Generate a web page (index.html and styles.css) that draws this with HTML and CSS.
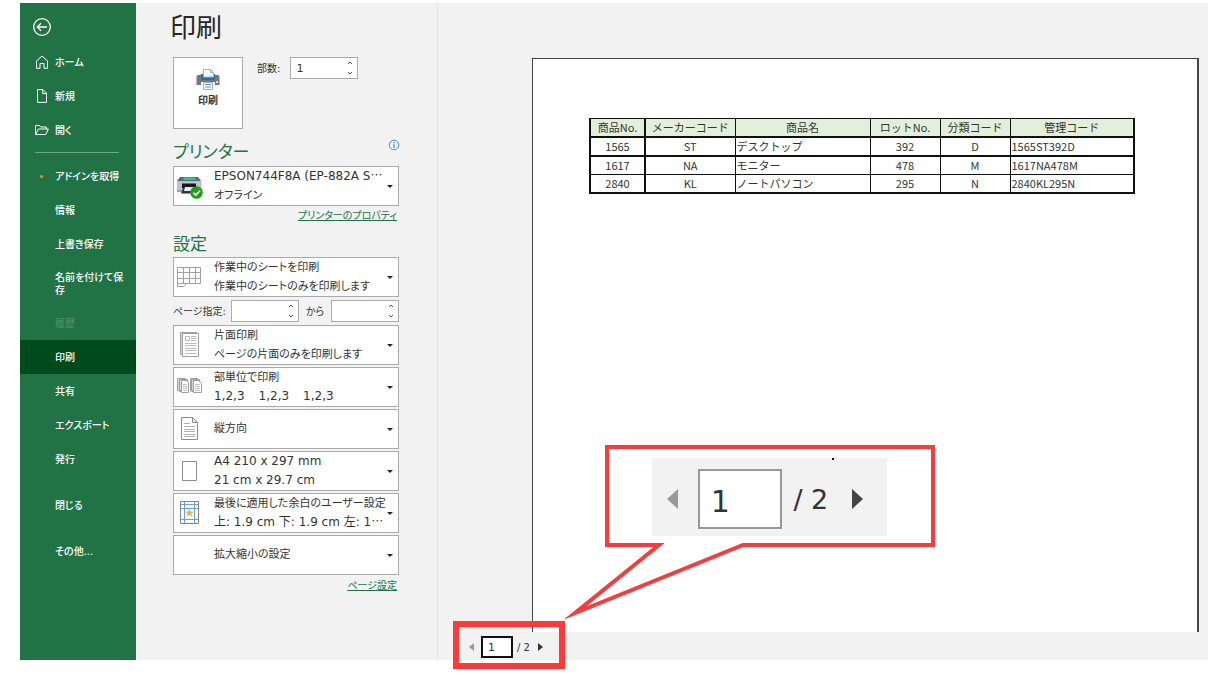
FILE: index.html
```html
<!DOCTYPE html>
<html lang="ja">
<head>
<meta charset="utf-8">
<title>印刷</title>
<meta name="viewport" content="width=device-width, initial-scale=1">
<link rel="stylesheet" href="styles.css">
</head>
<body>
<div class="app">
  <nav class="sidebar" aria-label="ファイル">
    <button class="back" aria-label="戻る">
      <svg width="20" height="20" viewBox="0 0 20 20" fill="none" stroke="currentColor" stroke-width="1.3"><circle cx="10" cy="10" r="8.3"/><path d="M15 10H5.5M9 6.2L5.2 10L9 13.8"/></svg>
    </button>
    <a class="nav-item" href="#home"><svg class="nav-icon" width="14" height="14" viewBox="0 0 14 14" fill="none" stroke="currentColor"><path d="M1 6.4L7 1L13 6.4M1.5 6V13.3H5V8.5H9V13.3H12.5V6"/></svg>ホーム</a>
    <a class="nav-item" href="#new"><svg class="nav-icon" width="14" height="14" viewBox="0 0 14 14" fill="none" stroke="currentColor"><path d="M2.5 .6H8L11.5 4.2V13.4H2.5ZM7.7 .8V4.6H11.3"/></svg>新規</a>
    <a class="nav-item" href="#open"><svg class="nav-icon" width="14" height="14" viewBox="0 0 14 14" fill="none" stroke="currentColor"><path d="M.5 11.3V2.5H4.5L5.7 4H11.3V5.8M.6 11.5L3.4 6H13.4L10.7 11.5Z"/></svg>開く</a>
    <hr class="nav-rule">
    <a class="nav-item" href="#addins"><span class="dot"></span>アドインを取得</a>
    <a class="nav-item" href="#info">情報</a>
    <a class="nav-item" href="#save">上書き保存</a>
    <a class="nav-item tall" href="#saveas">名前を付けて保存</a>
    <a class="nav-item disabled" aria-disabled="true">履歴</a>
    <a class="nav-item current" href="#print" aria-current="page">印刷</a>
    <a class="nav-item" href="#share">共有</a>
    <a class="nav-item" href="#export">エクスポート</a>
    <a class="nav-item" href="#publish">発行</a>
    <a class="nav-item spaced" href="#close">閉じる</a>
    <a class="nav-item spaced" href="#more">その他...</a>
  </nav>

  <main class="content">
    <section class="settings">
      <h1>印刷</h1>
      <div class="print-row">
        <button class="print-button">
          <svg width="24" height="22" viewBox="0 0 24 22"><path d="M2 6H22Q23.500 6 23.500 8V16H.5V8Q.5 6 2 6Z" fill="#767676"/><path d="M5 5H19V11H5Z" fill="#2e6ca8"/><path d="M7.500.5H14.500L17.500 3.500V8H7.500Z" fill="#fff" stroke="#9db3c9"/><path d="M14.500.5V3.500H17.500" fill="none" stroke="#9db3c9"/><path d="M5 13H19V16H5Z" fill="#f2f2f2"/><path d="M7.500 13.500H16.500V20.500H7.500Z" fill="#fff" stroke="#9db3c9"/><path d="M9 15.500H15M9 18H15" stroke="#5b92c8"/><circle cx="21" cy="13" r="1" fill="#fff"/></svg>
          <span>印刷</span>
        </button>
        <label for="copies">部数:</label>
        <span class="spin"><input id="copies" type="text" inputmode="numeric" value="1"><svg width="6" height="14" viewBox="0 0 6 14" fill="none" stroke="#555"><path d="M1 3L3 1L5 3M1 11L3 13L5 11"/></svg></span>
      </div>

      <div class="heading-row">
        <h2>プリンター</h2>
        <svg class="info" width="12" height="12" viewBox="0 0 12 12" fill="none" stroke="#4a96cf"><circle cx="6" cy="6" r="4.8"/><path d="M6 5.2V9M6 3V4.2" stroke-width="1.4"/></svg>
      </div>
      <button class="picker" aria-haspopup="listbox">
        <svg class="pick-icon" width="28" height="28" viewBox="0 0 28 28"><path d="M4 5H22L25 9H1Z" fill="#5e6670"/><path d="M8 5.500H19L20 8H7Z" fill="#2fc68a"/><path d="M1 9H25.500V18H1Z" fill="#b9c3cf"/><path d="M1 18H25V20H1Z" fill="#9aa4b0"/><path d="M6 11.500H20V16H6Z" fill="#15181c"/><path d="M7 16H20L21 21.500H5Z" fill="#30353b"/><path d="M9 15H18L19 19H8Z" fill="#e9edf2"/><circle cx="20.500" cy="20.500" r="6.300" fill="#219c18"/><path d="M17.300 20.800L19.700 23L24 18.600" fill="none" stroke="#fff" stroke-width="1.700"/></svg>
        <span class="pick-text"><span class="latin">EPSON744F8A (EP-882A S<span class="dots">…</span></span><span>オフライン</span></span>
        <span class="arrow"></span>
      </button>
      <a class="sub-link" href="#printer-properties">プリンターのプロパティ</a>

      <h2>設定</h2>
      <div class="pickers">
        <button class="picker" aria-haspopup="listbox">
          <svg class="pick-icon" width="28" height="28" viewBox="0 0 28 28" fill="none" stroke="#a0a0a0"><path d="M1.500 4.500H24.500V20.500H10.500L8 23.500H1.500Z"/><path d="M7.500 4.500V20.500M13.500 4.500V20.500M19.500 4.500V20.500M1.500 9.500H24.500M1.500 15.500H24.500M1.500 20.500H10.500"/></svg>
          <span class="pick-text"><span>作業中のシートを印刷</span><span>作業中のシートのみを印刷します</span></span>
          <span class="arrow"></span>
        </button>
        <div class="range">
          <label for="from">ページ指定:</label>
          <span class="spin"><input id="from" type="text" inputmode="numeric"><svg width="6" height="14" viewBox="0 0 6 14" fill="none" stroke="#555"><path d="M1 3L3 1L5 3M1 11L3 13L5 11"/></svg></span>
          <label for="to">から</label>
          <span class="spin"><input id="to" type="text" inputmode="numeric"><svg width="6" height="14" viewBox="0 0 6 14" fill="none" stroke="#555"><path d="M1 3L3 1L5 3M1 11L3 13L5 11"/></svg></span>
        </div>
        <button class="picker" aria-haspopup="listbox">
          <svg class="pick-icon" width="28" height="28" viewBox="0 0 28 28" fill="#fff" stroke="#a0a0a0"><path d="M4.500 1.500H20.500V23.500H4.500Z" fill="#d8d8d8"/><path d="M6.500 2.500H22.500V25.500H6.500Z"/><path d="M9.500 5.500H13.500V9.500H9.500ZM15 5.500H20.500M15 7.500H20.500M15 9.500H20.500M9 12.500H20.500M9 14.500H20.500M9 17.500H20.500M9 19.500H20.500M9 22.500H20.500" stroke="#bbb"/></svg>
          <span class="pick-text"><span>片面印刷</span><span>ページの片面のみを印刷します</span></span>
          <span class="arrow"></span>
        </button>
        <button class="picker" aria-haspopup="listbox">
          <svg class="pick-icon" width="28" height="28" viewBox="0 0 28 28" fill="#fff" stroke="#a0a0a0"><path d="M1.500 5.500H9.500V17.500H1.500ZM3.500 6.500H11.500V18.500H3.500ZM14.500 5.500H21.500V17.500H14.500ZM15.500 6.500H23.500V18.500H15.500Z" fill="#d8d8d8"/><path d="M5.500 7.500H10.500L12.500 9.500V19.500H5.500ZM17.500 7.500H22.500L25.500 10.500V19.500H17.500Z"/><path d="M7 11.500H11M7 13.500H11M7 15.500H11M7 17.500H11M19 11.500H24M19 13.500H24M19 15.500H24M19 17.500H24" stroke="#c4c4c4"/></svg>
          <span class="pick-text"><span>部単位で印刷</span><span class="latin sets"><span>1,2,3</span><span>1,2,3</span><span>1,2,3</span></span></span>
          <span class="arrow"></span>
        </button>
        <div class="picker">
          <svg class="pick-icon" width="28" height="28" viewBox="0 0 28 28" fill="#fff" stroke="#8c8c8c"><path d="M5.500 2.500H16.500L21.500 7.500V24.500H5.500ZM16.500 2.500V7.500H21.500"/><path d="M8 8.500H14M8 11.500H19M8 14.500H19M8 16.500H19M8 19.500H19M8 21.500H19" stroke="#b0b0b0"/></svg>
          <select aria-label="印刷の向き"><option>縦方向</option><option>横方向</option></select>
          <span class="arrow"></span>
        </div>
        <button class="picker" aria-haspopup="listbox">
          <svg class="pick-icon" width="28" height="28" viewBox="0 0 28 28" fill="#fff" stroke="#8c8c8c"><path d="M6.500 4.500H20.500V23.500H6.500Z"/></svg>
          <span class="pick-text latin"><span>A4 210 x 297 mm</span><span>21 cm x 29.7 cm</span></span>
          <span class="arrow"></span>
        </button>
        <button class="picker" aria-haspopup="listbox">
          <svg class="pick-icon" width="28" height="28" viewBox="0 0 28 28" fill="none"><path d="M4.500 2.500H22.500V24.500H4.500Z" fill="#fff" stroke="#858585"/><path d="M8.500 3V24M18.500 3V24M5 5.500H22M5 9.500H22M5 20.500H22" stroke="#69a0d8"/><path d="M13.500 9.500L14.700 12.600L17.800 12.700L15.400 14.700L16.200 17.800L13.500 16L10.800 17.800L11.600 14.700L9.200 12.700L12.300 12.600Z" fill="#e8b163"/></svg>
          <span class="pick-text"><span>最後に適用した余白のユーザー設定</span><span class="latin">上: 1.9 cm 下: 1.9 cm 左: 1<span class="dots">…</span></span></span>
          <span class="arrow"></span>
        </button>
        <div class="picker">
          <span class="pick-icon"></span>
          <select aria-label="拡大縮小"><option>拡大縮小の設定</option></select>
          <span class="arrow"></span>
        </div>
      </div>
      <a class="sub-link" href="#page-setup">ページ設定</a>
    </section>

    <section class="preview" aria-label="印刷プレビュー">
      <div class="sheet">
        <table>
          <colgroup><col class="c-no"><col class="c-maker"><col class="c-name"><col class="c-lot"><col class="c-class"><col></colgroup>
          <thead><tr><th>商品No.</th><th>メーカーコード</th><th>商品名</th><th>ロットNo.</th><th>分類コード</th><th>管理コード</th></tr></thead>
          <tbody>
            <tr><td>1565</td><td>ST</td><td class="left">デスクトップ</td><td>392</td><td>D</td><td class="left">1565ST392D</td></tr>
            <tr><td>1617</td><td>NA</td><td class="left">モニター</td><td>478</td><td>M</td><td class="left">1617NA478M</td></tr>
            <tr><td>2840</td><td>KL</td><td class="left">ノートパソコン</td><td>295</td><td>N</td><td class="left">2840KL295N</td></tr>
          </tbody>
        </table>
      </div>
      <div class="pager">
        <button aria-label="前のページ"><svg width="5" height="8" viewBox="0 0 5 8"><path d="M5 0V8L0 4Z" fill="#999"/></svg></button>
        <input type="text" value="1" aria-label="ページ">
        <span>/ 2</span>
        <button aria-label="次のページ"><svg width="5" height="8" viewBox="0 0 5 8"><path d="M0 0V8L5 4Z" fill="#333"/></svg></button>
      </div>
      <div class="marker"></div>
      <div class="callout">
        <svg class="callout-shape" width="370" height="174" viewBox="0 0 370 174"><path d="M42 2H368V100H178L10 168L94 100H42Z" fill="#fff" stroke="#f53d3d" stroke-width="4" stroke-miterlimit="10"/></svg>
        <div class="zoomed">
          <button aria-label="前のページ"><svg width="11" height="20" viewBox="0 0 11 20"><path d="M11 0V20L0 10Z" fill="#999"/></svg></button>
          <input type="text" value="1" aria-label="ページ（拡大）">
          <span>/ 2</span>
          <button aria-label="次のページ"><svg width="11" height="20" viewBox="0 0 11 20"><path d="M0 0V20L11 10Z" fill="#444"/></svg></button>
          <i class="speck"></i>
        </div>
      </div>
    </section>
  </main>
</div>
</body>
</html>
```
FILE: styles.css
```css
* { box-sizing: border-box; }

body {
  margin: 0;
  padding: 3px 21px 14px 20px;
  min-height: 100vh;
  display: flex;
  background: #fff;
  color: #333;
  font: 11px/19px "DejaVu Sans", "Noto Sans CJK JP", sans-serif;
  font-feature-settings: "palt";
}

button, input, select {
  font: inherit;
  font-feature-settings: inherit;
  color: inherit;
  margin: 0;
  border-radius: 0;
}

button { padding: 0; border: 0; background: none; }

.app { flex: 1; display: flex; background: #f2f2f2; }

/* Navigation */
.sidebar {
  flex: none;
  width: 116px;
  padding-top: 14px;
  display: flex;
  flex-direction: column;
  background: #217346;
  color: #fff;
  font-size: 10px;
  font-weight: 500;
  line-height: 13px;
}

.back { width: 20px; height: 20px; margin: 0 0 8px 12px; color: #fff; }
.back svg { display: block; }

.nav-item {
  position: relative;
  min-height: 34px;
  padding: 0 10px 0 35px;
  display: flex;
  align-items: center;
  color: inherit;
  text-decoration: none;
}

.nav-item.tall { min-height: 45px; }
.nav-item.current { background: #004b1c; }
.nav-item.disabled { color: #4b9069; }
.nav-item.spaced { margin-top: 12px; }
.nav-icon { position: absolute; left: 15px; }
.nav-rule { width: 84px; height: 1px; margin: 5px 0 6px 15px; border: 0; background: #6fa888; }

.dot {
  position: absolute;
  left: 20px;
  width: 3px;
  height: 3px;
  border-radius: 50%;
  background: #f0962e;
}

/* Settings column */
.content { flex: 1; min-width: 0; display: flex; }

.settings {
  flex: none;
  width: 302px;
  padding: 7px 38px 0 37px;
  border-right: 1px solid #e3e3e3;
}

h1 { margin: 0 0 11px -3px; font-size: 26px; font-weight: 400; line-height: 36px; color: #262626; }
h2 { margin: 0; font-size: 17px; font-weight: 400; line-height: 26px; color: #217346; }

.print-row { display: flex; align-items: flex-start; height: 72px; }
.print-row label { margin: 2px 10px 0 14px; font-size: 10px; }

.print-button {
  width: 70px;
  height: 72px;
  padding-top: 11px;
  display: flex;
  flex-direction: column;
  align-items: center;
  border: 1px solid #ababab;
  background: #fff;
  font-size: 10px;
  font-weight: 700;
}

.spin { position: relative; width: 68px; height: 22px; display: flex; }
.spin input { width: 100%; padding: 0 14px 0 5px; border: 1px solid #ababab; background: #fff; }
.spin svg { position: absolute; right: 5px; top: 4px; }

.heading-row { display: flex; justify-content: space-between; align-items: flex-start; padding-top: 10px; }
.info { margin-right: -1px; }
.heading-row h2 { margin-bottom: 1px; }

.picker {
  position: relative;
  width: 226px;
  height: 40px;
  padding: 0 2px;
  display: flex;
  align-items: center;
  gap: 10px;
  border: 1px solid #ababab;
  background: #fff;
  text-align: left;
}

.pick-icon { flex: none; width: 28px; }
.pick-text { display: flex; flex-direction: column; white-space: nowrap; }
.latin { font-size: 12px; }
.dots { font-family: "Noto Sans CJK JP", sans-serif; line-height: 1; }
.sets { display: flex; gap: 14px; }

.picker select {
  flex: 1;
  height: 36px;
  padding: 0 0 2px;
  border: 0;
  background: none;
  appearance: none;
}

.arrow {
  position: absolute;
  right: 5px;
  top: 18px;
  border: 3px solid transparent;
  border-top: 3px solid #222;
  border-bottom: 0;
}

.sub-link {
  display: block;
  width: fit-content;
  margin: 0 2px 0 auto;
  color: #217346;
  font-size: 10px;
  line-height: 20px;
}

.sub-link + h2 { margin: 5px 0 0; }
.pickers { display: flex; flex-direction: column; gap: 2px; margin-bottom: 1px; }
.range { display: flex; align-items: center; height: 24px; font-size: 10px; }
.range label { width: 32px; }
.range label:first-child { width: 58px; }
.range label[for="to"] { text-align: center; }

/* Preview */
.preview { position: relative; flex: 1; min-width: 0; display: flex; flex-direction: column; }

.sheet {
  flex: 1;
  margin: 55px 9px 0 94px;
  padding: 59px 56px 0;
  border: solid #444;
  border-width: 1px 2px 0 1px;
  background: #fff;
}

table {
  width: 100%;
  max-width: 546px;
  table-layout: fixed;
  border-collapse: collapse;
  border: 2px solid #111;
  border-top-width: 1px;
  font: 11px/17px "Noto Sans CJK JP", sans-serif;
  font-feature-settings: normal;
}

.c-no { width: 55px; }
.c-maker { width: 90px; }
.c-name { width: 135px; }
.c-lot, .c-class { width: 70px; }

th, td { height: 18px; padding: 0; border: 1px solid #111; font-weight: 400; text-align: center; white-space: nowrap; }
th { background: #e2efda; border-bottom-width: 2px; }
td:first-child, th:first-child { border-right-width: 2px; }
tbody tr:first-child td { border-bottom-width: 2px; }
td.left { padding-left: 1px; text-align: left; }

.pager {
  display: flex;
  align-items: center;
  height: 28px;
  padding: 2px 0 0 31px;
  gap: 4px;
  font-size: 10px;
}

.pager button svg, .zoomed button svg { display: block; }
.pager input { width: 32px; height: 22px; margin-left: 3px; padding: 0 5px; border: 2px solid #111; background: #fff; font-size: 11px; }
.pager button:last-child { margin-left: 4px; }

.marker {
  position: absolute;
  left: 15px;
  bottom: -9px;
  width: 112px;
  height: 48px;
  border: 6px solid #fd3a3a;
  pointer-events: none;
}

.callout { position: absolute; left: 127px; bottom: 41px; width: 370px; height: 174px; }
.callout-shape { position: absolute; inset: 0; }

.zoomed {
  position: absolute;
  left: 87px;
  top: 13px;
  width: 235px;
  height: 78px;
  padding: 4px 24px 0 15px;
  display: flex;
  align-items: center;
  justify-content: space-between;
  background: #f2f2f2;
  font-size: 27px;
}

.zoomed input { width: 84px; height: 60px; margin-left: 8px; padding: 4px 11px 0; border: 2px solid #999; background: #fff; font-size: 30px; }
.zoomed button:last-of-type { margin-left: 12px; }
.speck { position: absolute; right: 53px; top: 0; width: 2px; height: 2px; background: #111; }
```
